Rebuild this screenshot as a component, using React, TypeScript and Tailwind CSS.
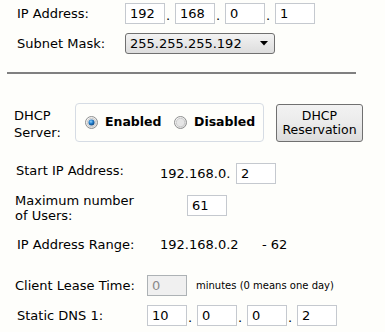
const font = "font-['DejaVu_Sans',Verdana,sans-serif]";

function Box({ value, disabled }: { value: string; disabled?: boolean }) {
  return (
    <div
      className={`w-[40px] h-[21px] border flex items-center pl-[4px] leading-none ${
        disabled
          ? "bg-[#f0f0f0] border-[#adb2b5] text-[#8a8a8a]"
          : "bg-white border-[#c5c9cf] text-black"
      }`}
    >
      {value}
    </div>
  );
}

function Octets({ values }: { values: string[] }) {
  return (
    <div className="flex items-center">
      {values.map((v, i) => (
        <div key={i} className="flex items-center">
          <Box value={v} />
          {i < values.length - 1 && (
            <span className="w-[10px] pl-[1px] self-end pb-[2px] leading-none text-[13px]">.</span>
          )}
        </div>
      ))}
    </div>
  );
}

function Radio({ checked }: { checked?: boolean }) {
  return (
    <svg width="13" height="13" viewBox="0 0 13 13" className="shrink-0">
      <defs>
        <linearGradient id="rg" x1="0" y1="0" x2="1" y2="1">
          <stop offset="0" stopColor="#ffffff" />
          <stop offset="1" stopColor="#d4d4d4" />
        </linearGradient>
        <radialGradient id="dot" cx="0.4" cy="0.35" r="0.7">
          <stop offset="0" stopColor="#8fd3ff" />
          <stop offset="0.5" stopColor="#1d7ac9" />
          <stop offset="1" stopColor="#0f3f73" />
        </radialGradient>
      </defs>
      <circle cx="6.5" cy="6.5" r="6" fill="url(#rg)" stroke="#8e8f8f" strokeWidth="1" />
      <circle cx="6.5" cy="6.5" r="4.2" fill="#e6e6e6" stroke="#c4c4c4" strokeWidth="0.8" />
      {checked && <circle cx="6.5" cy="6.5" r="3" fill="url(#dot)" />}
    </svg>
  );
}

export default function App() {
  return (
    <div className={`w-[385px] h-[332px] overflow-hidden bg-[#fefefb] text-black text-[13px] ${font}`}>
      <div className="pt-[3px]">
        <div className="flex items-center h-[21px] pl-[17px]">
          <span className="w-[108px]">IP Address:</span>
          <Octets values={["192", "168", "0", "1"]} />
        </div>

        <div className="flex items-center h-[21px] pl-[17px] mt-[9px]">
          <span className="w-[108px]">Subnet Mask:</span>
          <div className="w-[150px] h-[21px] border border-[#707070] rounded-[3px] bg-gradient-to-b from-[#f3f3f3] to-[#dddddd] flex items-center justify-between pl-[4px] pr-[6px]">
            <span className="leading-none">255.255.255.192</span>
            <svg width="8" height="5" viewBox="0 0 8 5">
              <path d="M0 0h8L4 4.5z" fill="#000" />
            </svg>
          </div>
        </div>

        <div className="mt-[18px] ml-[7px] w-[349px] h-[2px] bg-[#808080]" />

        <div className="flex items-start mt-[29px]">
          <div className="w-[75px] pl-[14px] leading-[17px] pt-[4px]">
            DHCP
            <br />
            Server:
          </div>
          <div className="w-[189px] h-[39px] border border-[#d6dce4] rounded-[4px] flex items-center pl-[9px] text-[12.5px] font-bold">
            <Radio checked />
            <span className="ml-[7px] w-[69px]">Enabled</span>
            <Radio />
            <span className="ml-[7px]">Disabled</span>
          </div>
          <div className="ml-[12px] mt-[1px] w-[87px] h-[38px] border border-[#707070] rounded-[3px] bg-gradient-to-b from-[#f2f2f2] via-[#ebebeb] to-[#dcdcdc] text-center text-[12.5px] flex flex-col justify-center">
            <span className="leading-[14px]">DHCP</span>
            <span className="leading-[14px]">Reservation</span>
          </div>
        </div>

        <div className="flex items-center h-[21px] mt-[21px] pl-[16px]">
          <span className="w-[144px] -mt-[6px]">Start IP Address:</span>
          <span className="w-[76px]">192.168.0.</span>
          <Box value="2" />
        </div>

        <div className="flex items-start mt-[9px] pl-[15px]">
          <div className="w-[172px] leading-[15px]">
            Maximum number
            <br />
            of Users:
          </div>
          <div className="mt-[2px]">
            <Box value="61" />
          </div>
        </div>

        <div className="flex items-center h-[16px] mt-[14px] pl-[17px]">
          <span className="w-[143px]">IP Address Range:</span>
          <span className="w-[102px]">192.168.0.2</span>
          <span>- 62</span>
        </div>

        <div className="flex items-center h-[21px] mt-[22px] pl-[15px]">
          <span className="w-[132px]">Client Lease Time:</span>
          <Box value="0" disabled />
          <span className="ml-[9px] text-[10px]">minutes (0 means one day)</span>
        </div>

        <div className="flex items-center h-[21px] mt-[9px] pl-[17px]">
          <span className="w-[130px]">Static DNS 1:</span>
          <Octets values={["10", "0", "0", "2"]} />
        </div>
      </div>
    </div>
  );
}
